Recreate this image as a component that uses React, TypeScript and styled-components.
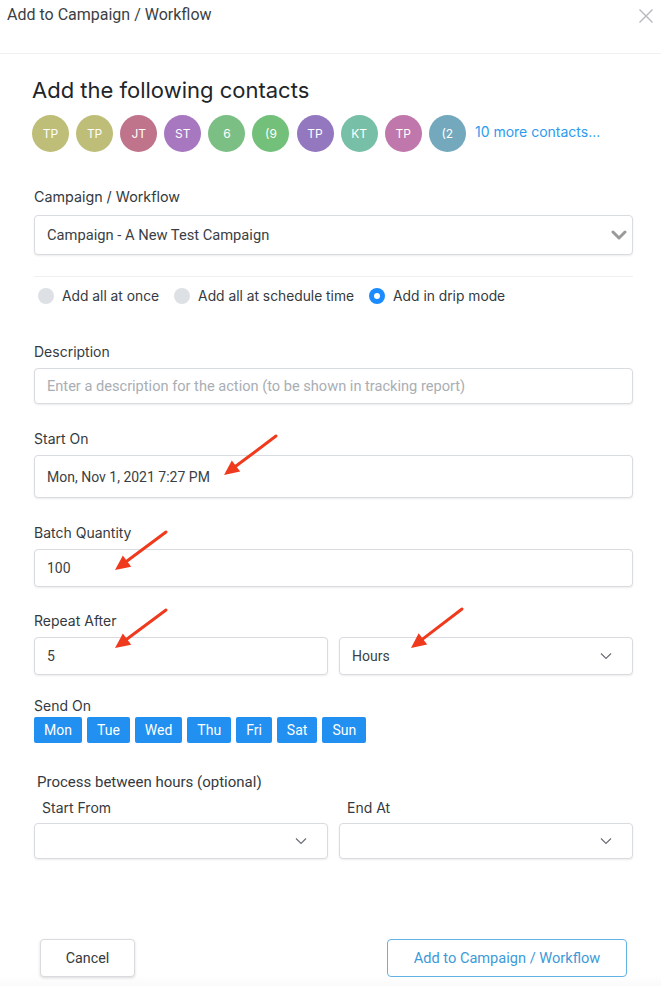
import styled, { createGlobalStyle } from 'styled-components';

const GlobalStyle = createGlobalStyle`
  html, body {
    margin: 0;
    padding: 0;
    background: #fff;
  }
  * {
    box-sizing: border-box;
  }
`;

const Page = styled.div`
  position: relative;
  width: 661px;
  height: 986px;
  overflow: hidden;
  background: #fff;
  font-family: Roboto, "Liberation Sans", sans-serif;
  color: #343a40;
`;

const Header = styled.div`
  height: 54px;
  border-bottom: 1px solid #f0f1f3;
  display: flex;
  justify-content: space-between;
  align-items: flex-start;
  padding: 5px 7px 0 7px;
`;

const Title = styled.div`
  font-size: 16px;
  line-height: 20px;
  color: #3b3f44;
`;

const Close = styled.div`
  width: 16px;
  height: 16px;
  margin-top: 3px;
  display: flex;
`;

const Body = styled.div`
  padding: 0 28px 0 34px;
`;

const Heading = styled.h2`
  margin: 22px 0 0 -2px;
  font-family: Inter, "Noto Sans", sans-serif;
  font-weight: 400;
  font-size: 22px;
  line-height: 28px;
  color: #212529;
`;

const Avatars = styled.div`
  display: flex;
  align-items: center;
  margin: 11px 0 0 -2px;
  gap: 7.1px;
`;

const Avatar = styled.div<{ $bg: string }>`
  width: 37px;
  height: 37px;
  border-radius: 50%;
  background: ${(p) => p.$bg};
  color: #fff;
  font-family: Inter, "Noto Sans", sans-serif;
  font-size: 12px;
  display: flex;
  align-items: center;
  justify-content: center;
  flex-shrink: 0;
`;

const MoreLink = styled.span`
  font-family: Inter, "Noto Sans", sans-serif;
  font-size: 14px;
  color: #2d9bf0;
  margin-left: 2px;
  margin-top: -4px;
`;

const Label = styled.div<{ $top: number; $indent?: number; $inter?: boolean; $size?: number }>`
  margin-top: ${(p) => p.$top}px;
  padding-left: ${(p) => p.$indent || 0}px;
  font-family: ${(p) => (p.$inter ? 'Inter, "Noto Sans", sans-serif' : 'Roboto, "Liberation Sans", sans-serif')};
  font-size: ${(p) => p.$size || 14}px;
  line-height: 20px;
  color: #343a40;
`;

const Box = styled.div<{ $h: number; $top: number; $size?: number }>`
  margin-top: ${(p) => p.$top}px;
  height: ${(p) => p.$h}px;
  border: 1px solid #d8dbe0;
  border-radius: 4px;
  box-shadow: 0 1px 2px rgba(0, 0, 0, 0.08);
  display: flex;
  align-items: center;
  justify-content: space-between;
  padding: 0 14px 0 12px;
  font-size: ${(p) => p.$size || 14}px;
  color: #3a3f45;
  background: #fff;
`;

const Placeholder = styled.span`
  color: #a9aeb4;
  font-size: 14.6px;
`;

const Divider = styled.div`
  margin-top: 21px;
  height: 1px;
  background: #eef0f2;
`;

const Radios = styled.div`
  display: flex;
  align-items: center;
  margin-top: 9px;
  padding-left: 4px;
  height: 20px;
  font-family: Inter, "Noto Sans", sans-serif;
  font-size: 13.8px;
  color: #343a40;
`;

const RadioItem = styled.label`
  display: flex;
  align-items: center;
  gap: 8px;
  margin-right: 15px;
`;

const Dot = styled.span<{ $on?: boolean }>`
  width: 16px;
  height: 16px;
  border-radius: 50%;
  background: ${(p) => (p.$on ? '#1a8cff' : '#dde0e4')};
  display: flex;
  align-items: center;
  justify-content: center;
  &::after {
    content: '';
    width: 6px;
    height: 6px;
    border-radius: 50%;
    background: ${(p) => (p.$on ? '#fff' : 'transparent')};
  }
`;

const Row = styled.div<{ $top: number }>`
  display: grid;
  grid-template-columns: 1fr 1fr;
  column-gap: 11px;
  margin-top: ${(p) => p.$top}px;
`;

const ChevronSlot = styled.span<{ $shift: number }>`
  display: flex;
  margin-right: ${(p) => p.$shift}px;
`;

const Days = styled.div`
  display: flex;
  gap: 5px;
  margin-top: 1px;
`;

const Day = styled.span`
  height: 26px;
  padding: 0 10px;
  border-radius: 2px;
  background: #2190f0;
  color: #fff;
  font-size: 14px;
  display: flex;
  align-items: center;
`;

const Footer = styled.div`
  margin-top: 80px;
  padding: 0 34px 0 40px;
  display: flex;
  justify-content: space-between;
  height: 60px;
  background: linear-gradient(to bottom, #fff 0px, #fff 36px, #f3f4f5 60px);
`;

const Button = styled.button<{ $primary?: boolean }>`
  height: 38px;
  width: ${(p) => (p.$primary ? 240 : 95)}px;
  border-radius: 4px;
  background: #fff;
  font-family: Roboto, "Liberation Sans", sans-serif;
  font-size: ${(p) => (p.$primary ? 14.6 : 14.3)}px;
  cursor: pointer;
  border: 1px solid ${(p) => (p.$primary ? '#62b2e6' : '#d9dbde')};
  color: ${(p) => (p.$primary ? '#3d9ad8' : '#343a40')};
  box-shadow: ${(p) => (p.$primary ? 'none' : '0 1px 3px rgba(0,0,0,0.15)')};
`;

const Overlay = styled.svg`
  position: absolute;
  left: 0;
  top: 0;
  pointer-events: none;
`;

const BoldChevron = () => (
  <svg width="16" height="12" viewBox="0 0 16 12">
    <path d="M2 3 L8 9 L14 3" fill="none" stroke="#9a9a9a" strokeWidth="3" strokeLinecap="round" strokeLinejoin="round" />
  </svg>
);

const ThinChevron = () => (
  <svg width="12" height="8" viewBox="0 0 12 8">
    <path d="M1 1.5 L6 6.5 L11 1.5" fill="none" stroke="#6b7077" strokeWidth="1.2" />
  </svg>
);

const arrows: [number, number, number, number][] = [
  [276, 436, 224, 475],
  [166, 532, 115, 570],
  [166, 610, 115, 648],
  [462, 609, 411, 648],
];

const Arrow = ({ x1, y1, x2, y2 }: { x1: number; y1: number; x2: number; y2: number }) => {
  const a = Math.atan2(y2 - y1, x2 - x1);
  const len = 15;
  const w = 7;
  const bx = x2 - len * Math.cos(a);
  const by = y2 - len * Math.sin(a);
  const px = -Math.sin(a) * w;
  const py = Math.cos(a) * w;
  return (
    <g>
      <line x1={x1} y1={y1} x2={bx} y2={by} stroke="#f03a1e" strokeWidth="3" strokeLinecap="round" />
      <polygon points={`${x2},${y2} ${bx + px},${by + py} ${bx - px},${by - py}`} fill="#f03a1e" />
    </g>
  );
};

const contacts = [
  { t: 'TP', c: '#bebe79' },
  { t: 'TP', c: '#bebe79' },
  { t: 'JT', c: '#bf748b' },
  { t: 'ST', c: '#a777c0' },
  { t: '6', c: '#7cbf85' },
  { t: '(9', c: '#72c07a' },
  { t: 'TP', c: '#9378c0' },
  { t: 'KT', c: '#77bfa6' },
  { t: 'TP', c: '#c077ab' },
  { t: '(2', c: '#74a9bd' },
];

const days = ['Mon', 'Tue', 'Wed', 'Thu', 'Fri', 'Sat', 'Sun'];

export default function App() {
  return (
    <Page>
      <GlobalStyle />
      <Header>
        <Title>Add to Campaign / Workflow</Title>
        <Close>
          <svg width="16" height="16" viewBox="0 0 16 16">
            <path d="M1.5 1.5 L14.5 14.5 M14.5 1.5 L1.5 14.5" stroke="#b5b8bc" strokeWidth="1.4" />
          </svg>
        </Close>
      </Header>

      <Body>
        <Heading>Add the following contacts</Heading>
        <Avatars>
          {contacts.map((c, i) => (
            <Avatar key={i} $bg={c.c}>{c.t}</Avatar>
          ))}
          <MoreLink>10 more contacts...</MoreLink>
        </Avatars>

        <Label $top={35} $inter $size={14.3}>Campaign / Workflow</Label>
        <Box $h={40} $top={8} $size={14.7}>
          <span>Campaign - A New Test Campaign</span>
          <ChevronSlot $shift={-9}>
            <BoldChevron />
          </ChevronSlot>
        </Box>

        <Divider />
        <Radios>
          <RadioItem><Dot />Add all at once</RadioItem>
          <RadioItem><Dot />Add all at schedule time</RadioItem>
          <RadioItem><Dot $on />Add in drip mode</RadioItem>
        </Radios>

        <Label $top={36} $inter>Description</Label>
        <Box $h={36} $top={6}>
          <Placeholder>Enter a description for the action (to be shown in tracking report)</Placeholder>
        </Box>

        <Label $top={25} $inter>Start On</Label>
        <Box $h={43} $top={6}>
          <span>Mon, Nov 1, 2021 7:27 PM</span>
        </Box>

        <Label $top={25} $inter>Batch Quantity</Label>
        <Box $h={38} $top={6}>
          <span>100</span>
        </Box>

        <Label $top={24} $inter>Repeat After</Label>
        <Row $top={6}>
          <Box $h={38} $top={0}>
            <span>5</span>
          </Box>
          <Box $h={38} $top={0}>
            <span>Hours</span>
            <ChevronSlot $shift={6}>
              <ThinChevron />
            </ChevronSlot>
          </Box>
        </Row>

        <Label $top={21} $inter>Send On</Label>
        <Days>
          {days.map((d) => (
            <Day key={d}>{d}</Day>
          ))}
        </Days>

        <Label $top={29} $indent={3} $size={15}>Process between hours (optional)</Label>
        <Row $top={6}>
          <Label $top={0} $indent={8} $inter>Start From</Label>
          <Label $top={0} $indent={8} $inter>End At</Label>
        </Row>
        <Row $top={5}>
          <Box $h={36} $top={0}>
            <span />
            <ChevronSlot $shift={6}>
              <ThinChevron />
            </ChevronSlot>
          </Box>
          <Box $h={36} $top={0}>
            <span />
            <ChevronSlot $shift={6}>
              <ThinChevron />
            </ChevronSlot>
          </Box>
        </Row>
      </Body>

      <Footer>
        <Button>Cancel</Button>
        <Button $primary>Add to Campaign / Workflow</Button>
      </Footer>

      <Overlay width="661" height="986" viewBox="0 0 661 986">
        {arrows.map(([x1, y1, x2, y2], i) => (
          <Arrow key={i} x1={x1} y1={y1} x2={x2} y2={y2} />
        ))}
      </Overlay>
    </Page>
  );
}
